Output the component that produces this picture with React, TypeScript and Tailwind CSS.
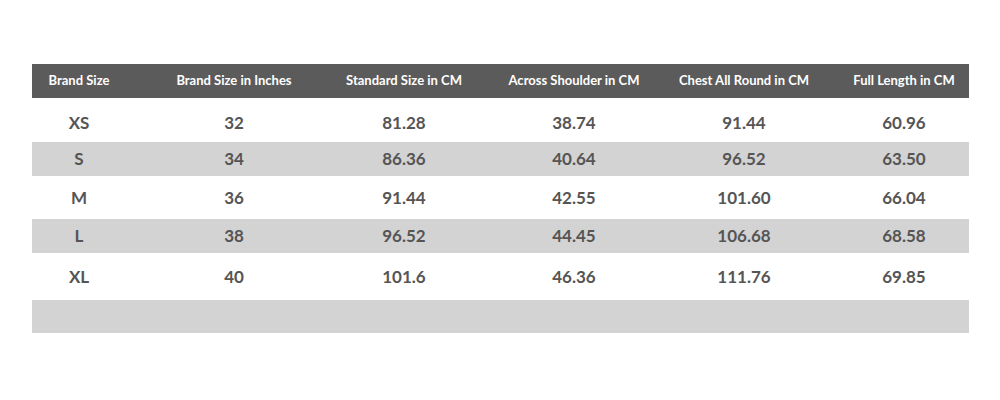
import React from 'react';

const headers = [
  'Brand Size',
  'Brand Size in Inches',
  'Standard Size in CM',
  'Across Shoulder in CM',
  'Chest All Round in CM',
  'Full Length in CM',
];

const rows = [
  ['XS', '32', '81.28', '38.74', '91.44', '60.96'],
  ['S', '34', '86.36', '40.64', '96.52', '63.50'],
  ['M', '36', '91.44', '42.55', '101.60', '66.04'],
  ['L', '38', '96.52', '44.45', '106.68', '68.58'],
  ['XL', '40', '101.6', '46.36', '111.76', '69.85'],
];

const rowHeights = ['h-[44px] pt-[6px]', 'h-[34px]', 'h-[43px]', 'h-[34px]', 'h-[47px]'];

// first column is pulled left, last one nudged right to sit where the chart has them
const cellPad = (i: number) => (i === 0 ? 'pr-[23px]' : i === 5 ? 'pl-[10px]' : '');

const gridCols = 'grid grid-cols-[117px_170px_170px_170px_170px_1fr] items-center';

const App: React.FC = () => {
  return (
    <div className="w-[1000px] h-[400px] bg-white pt-[64px] px-[32px]" style={{ fontFamily: 'Lato, "Open Sans", sans-serif' }}>
      <div className="w-[937px]">
        <div className={`${gridCols} h-[34px] bg-[#5b5b5b] text-white text-[13px] font-bold`}>
          {headers.map((h, i) => (
            <div key={h} className={`text-center whitespace-nowrap ${cellPad(i)}`}>
              {h}
            </div>
          ))}
        </div>
        {rows.map((r, ri) => (
          <div
            key={r[0]}
            className={`${gridCols} ${rowHeights[ri]} ${ri % 2 === 1 ? 'bg-[#d3d3d3]' : 'bg-white'} text-[#555555] text-[17px] font-bold`}
          >
            {r.map((v, i) => (
              <div key={i} className={`text-center ${cellPad(i)}`}>
                {v}
              </div>
            ))}
          </div>
        ))}
        <div className="h-[33px] bg-[#d3d3d3]" />
      </div>
    </div>
  );
};

export default App;
